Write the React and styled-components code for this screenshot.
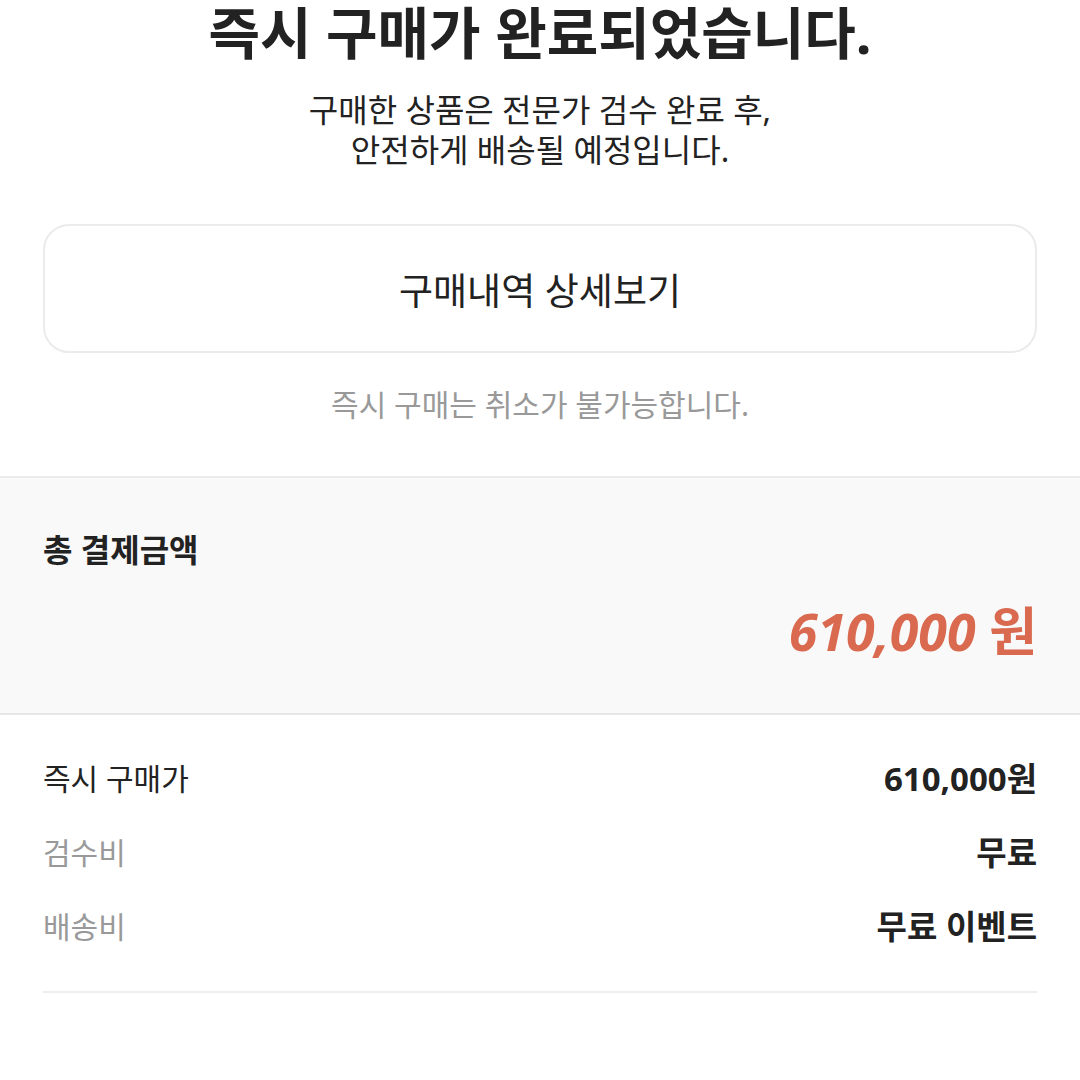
import React from 'react';
import styled, { createGlobalStyle } from 'styled-components';

const GlobalStyle = createGlobalStyle`
  html, body {
    margin: 0;
    padding: 0;
    background: #ffffff;
  }
  body {
    font-family: "Noto Sans", "Noto Sans CJK KR", sans-serif;
    color: #222222;
  }
`;

const Page = styled.main`
  width: 1080px;
  height: 1080px;
  overflow: hidden;
  background: #ffffff;
`;

const Top = styled.section`
  display: flex;
  flex-direction: column;
  align-items: center;
  padding: 0 43px 51px;
  border-bottom: 2px solid #ebebeb;
`;

const Title = styled.h1`
  margin: 0;
  font-size: 56px;
  line-height: 64px;
  font-weight: 700;
  color: #222222;
`;

const Message = styled.p`
  margin: 26px 0 0;
  font-size: 32px;
  line-height: 40px;
  text-align: center;
  color: #222222;
`;

const DetailButton = styled.button`
  margin-top: 54px;
  width: 100%;
  height: 129px;
  border: 2px solid #ebebeb;
  border-radius: 26px;
  background: #ffffff;
  font-family: inherit;
  font-size: 37px;
  color: #222222;
`;

const Notice = styled.p`
  margin: 32px 0 0;
  font-size: 30px;
  line-height: 40px;
  color: #999999;
`;

const TotalBox = styled.section`
  background: #f9f9f9;
  padding: 52px 43px 50px;
  border-bottom: 2px solid #e6e6e6;
`;

const TotalLabel = styled.h2`
  margin: 0;
  font-size: 32px;
  line-height: 40px;
  font-weight: 700;
  color: #222222;
`;

const TotalAmount = styled.div`
  margin-top: 29px;
  text-align: right;
  font-size: 52px;
  line-height: 64px;
  font-weight: 700;
  font-style: italic;
  color: #d9694f;
`;

const Unit = styled.span`
  font-style: normal;
`;

const Breakdown = styled.section`
  margin: 0 43px;
  padding: 44px 0 44px;
  border-bottom: 2px solid #eeeeee;
  display: flex;
  flex-direction: column;
  gap: 34px;
`;

const Row = styled.div`
  display: flex;
  justify-content: space-between;
  align-items: center;
  line-height: 40px;
`;

const Label = styled.span`
  font-size: 30px;
  color: ${p => (p.$muted ? '#999999' : '#222222')};
`;

const Value = styled.span`
  font-size: 33px;
  font-weight: 700;
  color: #222222;
`;

const rows = [
  { label: '즉시 구매가', value: '610,000원' },
  { label: '검수비', value: '무료', muted: true },
  { label: '배송비', value: '무료 이벤트', muted: true },
];

export default function App() {
  return (
    <Page>
      <GlobalStyle />
      <Top>
        <Title>즉시 구매가 완료되었습니다.</Title>
        <Message>
          구매한 상품은 전문가 검수 완료 후,
          <br />
          안전하게 배송될 예정입니다.
        </Message>
        <DetailButton>구매내역 상세보기</DetailButton>
        <Notice>즉시 구매는 취소가 불가능합니다.</Notice>
      </Top>
      <TotalBox>
        <TotalLabel>총 결제금액</TotalLabel>
        <TotalAmount>
          610,000 <Unit>원</Unit>
        </TotalAmount>
      </TotalBox>
      <Breakdown>
        {rows.map(r => (
          <Row key={r.label}>
            <Label $muted={r.muted}>{r.label}</Label>
            <Value>{r.value}</Value>
          </Row>
        ))}
      </Breakdown>
    </Page>
  );
}
